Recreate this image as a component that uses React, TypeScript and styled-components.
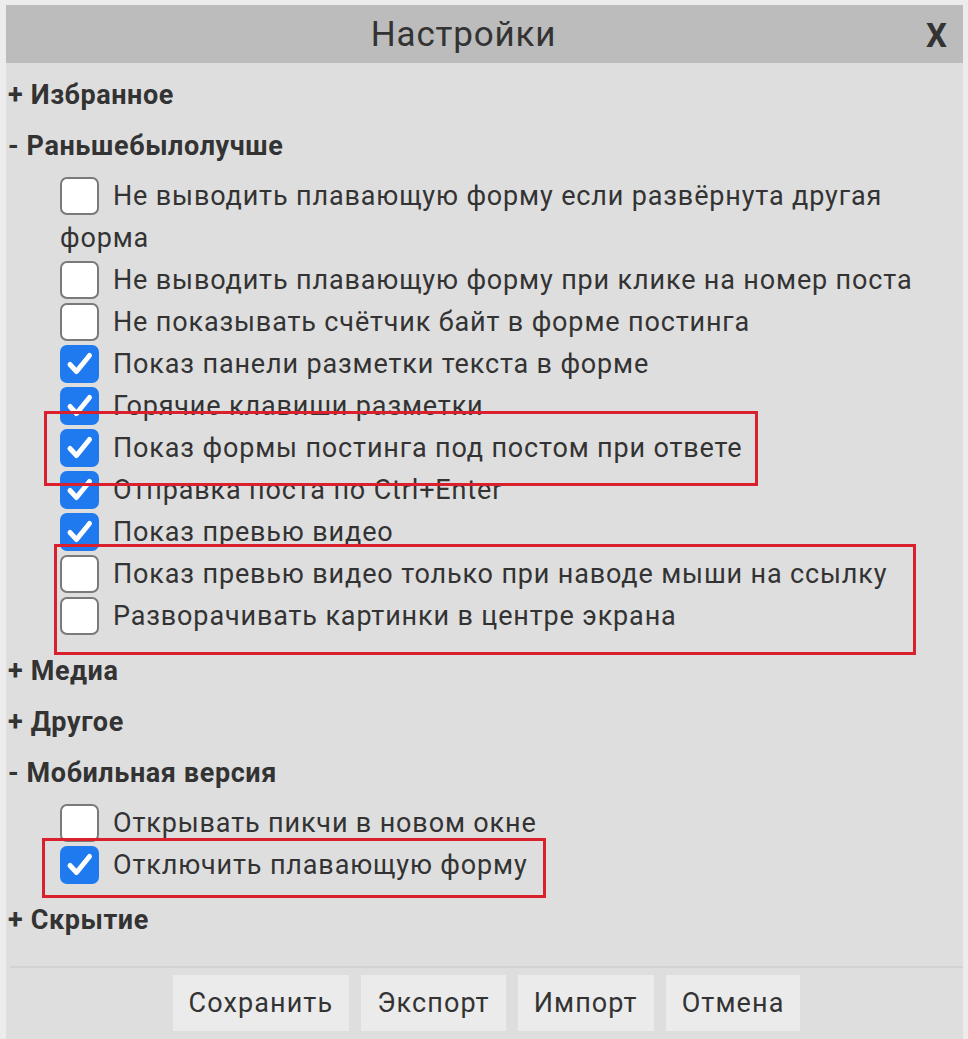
import styled, { createGlobalStyle } from "styled-components";

const GlobalStyle = createGlobalStyle`
  html, body {
    margin: 0;
    padding: 0;
    background: #ececec;
    font-family: Roboto, "Liberation Sans", sans-serif;
  }
`;

type Item = { label: string; checked: boolean };
type Section = { title: string; open: boolean; items?: Item[] };

const sections: Section[] = [
  { title: "Избранное", open: false },
  {
    title: "Раньшебылолучше",
    open: true,
    items: [
      { label: "Не выводить плавающую форму если развёрнута другая форма", checked: false },
      { label: "Не выводить плавающую форму при клике на номер поста", checked: false },
      { label: "Не показывать счётчик байт в форме постинга", checked: false },
      { label: "Показ панели разметки текста в форме", checked: true },
      { label: "Горячие клавиши разметки", checked: true },
      { label: "Показ формы постинга под постом при ответе", checked: true },
      { label: "Отправка поста по Ctrl+Enter", checked: true },
      { label: "Показ превью видео", checked: true },
      { label: "Показ превью видео только при наводе мыши на ссылку", checked: false },
      { label: "Разворачивать картинки в центре экрана", checked: false },
    ],
  },
  { title: "Медиа", open: false },
  { title: "Другое", open: false },
  {
    title: "Мобильная версия",
    open: true,
    items: [
      { label: "Открывать пикчи в новом окне", checked: false },
      { label: "Отключить плавающую форму", checked: true },
    ],
  },
  { title: "Скрытие", open: false },
];

// red annotation frames drawn over the screenshot
const marks = [
  { left: 38, top: 406, width: 714, height: 75 },
  { left: 48, top: 539, width: 862, height: 111 },
  { left: 36, top: 833, width: 504, height: 60 },
];

const Check = ({ checked }: { checked: boolean }) => (
  <Box $checked={checked}>
    {checked && (
      <svg width="39" height="38" viewBox="0 0 39 38">
        <path
          d="M10 19.5 L16.5 26.5 L29.5 10.5"
          fill="none"
          stroke="#fff"
          strokeWidth="5"
          strokeLinecap="round"
          strokeLinejoin="round"
        />
      </svg>
    )}
  </Box>
);

export default function App() {
  return (
    <>
      <GlobalStyle />
      <Panel>
        <Header>
          <Title>Настройки</Title>
          <Close>X</Close>
        </Header>
        <Body>
          {sections.map((s) => (
            <div key={s.title}>
              <Heading>
                {s.open ? "-" : "+"} {s.title}
              </Heading>
              {s.open && s.items && (
                <List>
                  {s.items.map((it) => (
                    <Row key={it.label}>
                      <Check checked={it.checked} />
                      {it.label}
                    </Row>
                  ))}
                </List>
              )}
            </div>
          ))}
        </Body>
        <Footer>
          <Button>Сохранить</Button>
          <Button>Экспорт</Button>
          <Button>Импорт</Button>
          <Button>Отмена</Button>
        </Footer>
        {marks.map((m, i) => (
          <Mark
            key={i}
            style={{ left: m.left, top: m.top, width: m.width, height: m.height }}
          />
        ))}
      </Panel>
    </>
  );
}

const Panel = styled.div`
  position: relative;
  margin: 5px 5px 0 6px;
  background: #dedede;
  min-height: 1034px;
  display: flex;
  flex-direction: column;
`;

const Header = styled.div`
  position: relative;
  height: 58px;
  padding-right: 42px;
  background: #bcbcbc;
  display: flex;
  align-items: center;
  justify-content: center;
`;

const Title = styled.div`
  font-size: 35px;
  color: #333;
  letter-spacing: 0.8px;
`;

const Close = styled.div`
  position: absolute;
  right: 16px;
  top: 11px;
  font-size: 33px;
  font-weight: 700;
  color: #333;
`;

const Body = styled.div`
  padding: 7px 0 19px 2px;
  flex: 1;
`;

const Heading = styled.div`
  font-size: 27px;
  font-weight: 700;
  color: #333;
  line-height: 51px;
  letter-spacing: 0.6px;
`;

const List = styled.div`
  padding: 3px 0 9px 52px;
`;

const Row = styled.div`
  font-size: 27px;
  line-height: 42px;
  color: #333;
  letter-spacing: 0.85px;
  padding-right: 40px;
`;

const Box = styled.span<{ $checked: boolean }>`
  display: inline-block;
  vertical-align: middle;
  box-sizing: border-box;
  width: 39px;
  height: 38px;
  margin: -4px 14px 0 0;
  border-radius: 7px;
  background: ${(p) => (p.$checked ? "#1f7af0" : "#fff")};
  border: ${(p) => (p.$checked ? "none" : "2px solid #7a7a7a")};
  svg {
    display: block;
  }
`;

const Footer = styled.div`
  border-top: 2px solid #d2d2d2;
  padding: 7px 0 8px;
  display: flex;
  justify-content: center;
  gap: 12px;
  margin-left: 4px;
`;

const Button = styled.div`
  background: #ebebeb;
  height: 56px;
  padding: 0 16px;
  display: flex;
  align-items: center;
  font-size: 27px;
  letter-spacing: 1.1px;
  color: #333;
`;

const Mark = styled.div`
  position: absolute;
  box-sizing: border-box;
  border: 3px solid #d9202c;
  pointer-events: none;
`;
